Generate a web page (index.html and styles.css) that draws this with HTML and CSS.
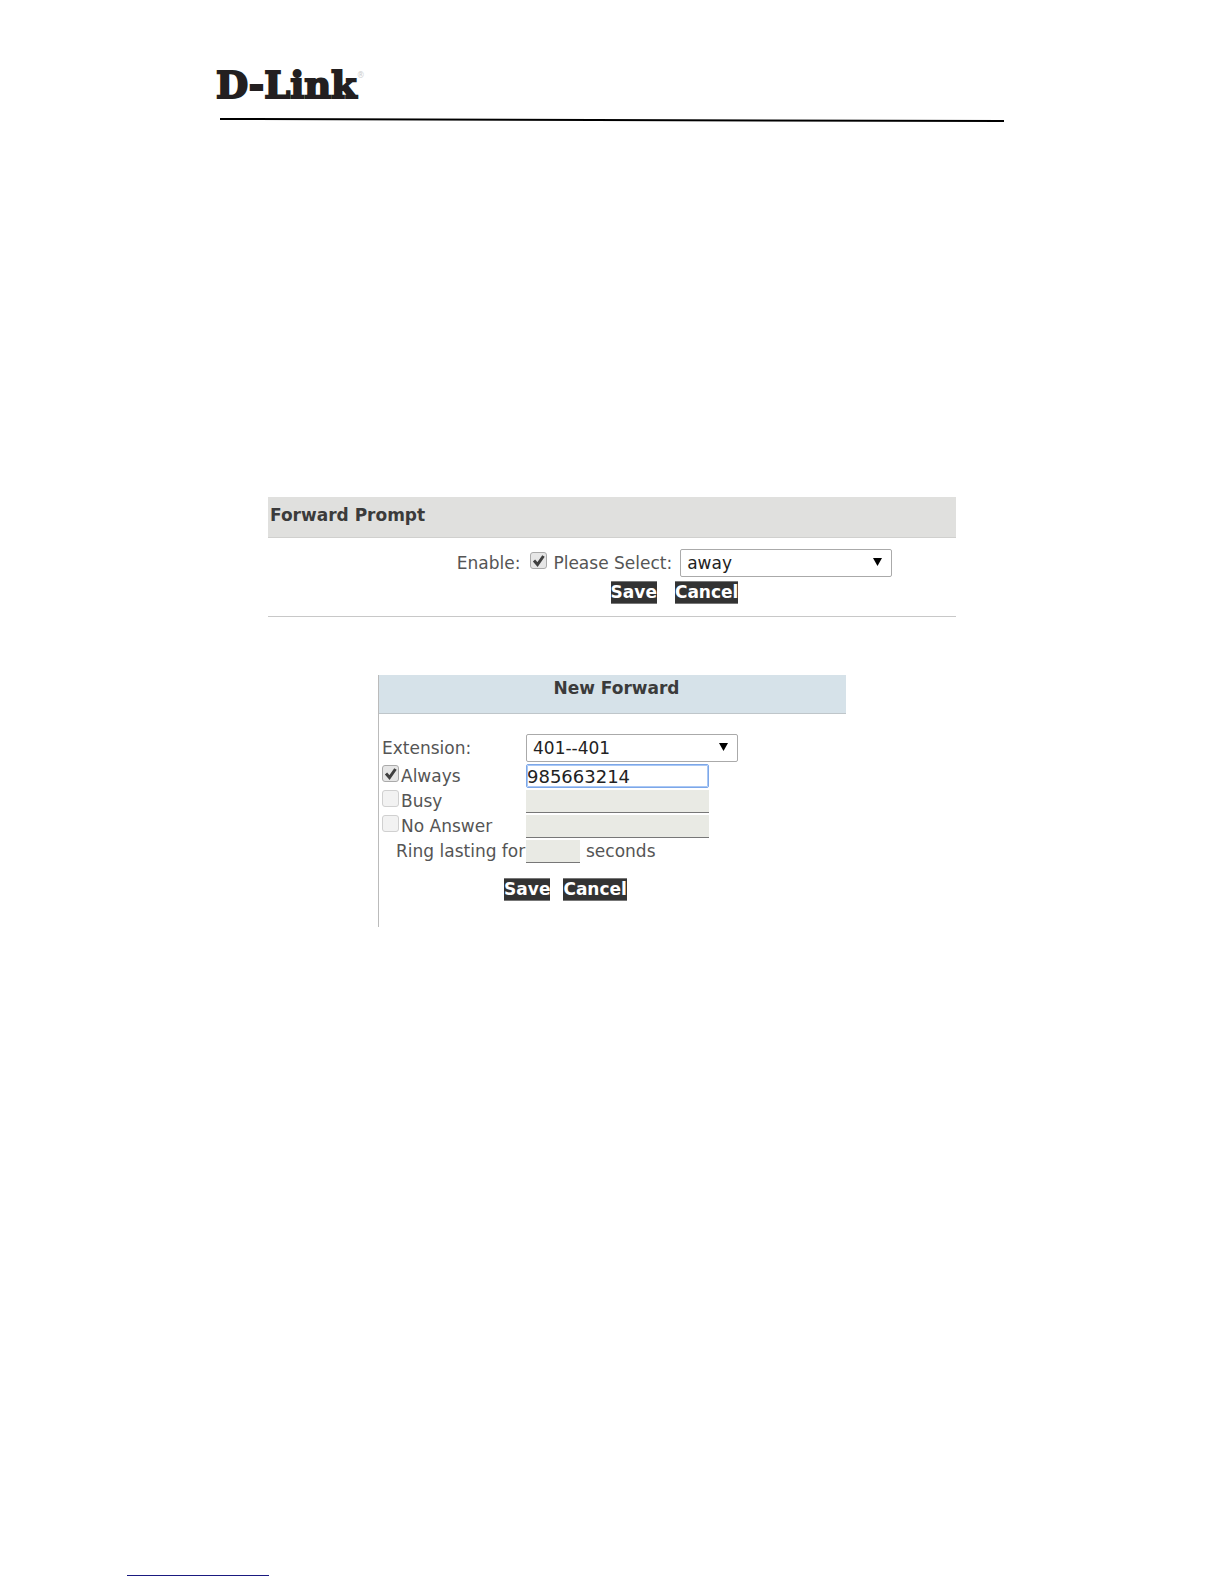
FILE: index.html
```html
<!DOCTYPE html>
<html lang="en">
<head>
    <meta charset="utf-8">
    <meta name="viewport" content="width=device-width, initial-scale=1">
    <title>D-Link</title>
    <link rel="stylesheet" href="styles.css">
</head>
<body>
<header class="page-header">
    <div class="logo">D-Link<sup class="logo-mark">®</sup></div>
    <svg class="header-rule" viewBox="0 0 784 4" preserveAspectRatio="none" aria-hidden="true">
        <path d="M0 1 L784 3" stroke="#000" stroke-width="2"/>
    </svg>
</header>

<main class="content">
    <form class="prompt-panel">
        <h2 class="prompt-title">Forward Prompt</h2>
        <div class="prompt-body">
            <div class="prompt-row">
                <label for="enable">Enable:</label>
                <input id="enable" class="checkbox prompt-checkbox" type="checkbox" checked>
                <label for="prompt">Please Select:</label>
                <select id="prompt" class="select prompt-select">
                    <option>away</option>
                </select>
            </div>
            <div class="buttons prompt-buttons">
                <button class="button" type="button">Save</button>
                <button class="button" type="button">Cancel</button>
            </div>
        </div>
    </form>

    <form class="forward-panel">
        <h2 class="forward-title">New Forward</h2>
        <div class="forward-body">
            <div class="forward-row">
                <label for="extension">Extension:</label>
                <select id="extension" class="select">
                    <option>401--401</option>
                </select>
            </div>
            <div class="forward-row">
                <div class="option">
                    <input id="always" class="checkbox" type="checkbox" checked>
                    <label for="always">Always</label>
                </div>
                <input class="text-input text-input-active" type="text" value="985663214" aria-label="Always forward to">
            </div>
            <div class="forward-row">
                <div class="option">
                    <input id="busy" class="checkbox" type="checkbox" disabled>
                    <label for="busy">Busy</label>
                </div>
                <input class="text-input" type="text" aria-label="Busy forward to" disabled>
            </div>
            <div class="forward-row">
                <div class="option">
                    <input id="no-answer" class="checkbox" type="checkbox" disabled>
                    <label for="no-answer">No Answer</label>
                </div>
                <input class="text-input" type="text" aria-label="No answer forward to" disabled>
            </div>
            <div class="forward-row">
                <label class="ring-label" for="ring">Ring lasting for</label>
                <div class="ring">
                    <input id="ring" class="text-input ring-input" type="text" disabled>
                    <span>seconds</span>
                </div>
            </div>
            <div class="buttons forward-buttons">
                <button class="button" type="button">Save</button>
                <button class="button" type="button">Cancel</button>
            </div>
        </div>
    </form>
</main>

<footer class="page-footer">
    <hr class="footer-rule">
</footer>
</body>
</html>
```

FILE: styles.css
```css
* {
    box-sizing: border-box;
}

body {
    display: flex;
    flex-direction: column;
    min-height: 100vh;
    margin: 0;
    background: #fff;
    color: #555;
    font: 17px/23px "DejaVu Sans", Verdana, sans-serif;
}

h2 {
    margin: 0;
    color: #3b3b3b;
    font-size: 17px;
    line-height: 24px;
}

/* Header */
.page-header {
    width: 100%;
    max-width: 784px;
    margin: 0 auto;
    padding-top: 65px;
}

.logo {
    margin-left: -4px;
    color: #231f20;
    font: bold 37px/40px "DejaVu Serif", serif;
    -webkit-text-stroke: 2px #231f20;
}

.logo-mark {
    color: #ccc;
    font: 8px/8px "DejaVu Sans", sans-serif;
    vertical-align: 20px;
    -webkit-text-stroke: 0;
}

.header-rule {
    display: block;
    width: 100%;
    height: 4px;
    margin-top: 13px;
}

/* Panels */
.content {
    flex: 1;
    padding-top: 375px;
}

.prompt-panel {
    max-width: 688px;
    margin: 0 auto;
    border-bottom: 1px solid #c8c8c8;
}

.prompt-title {
    height: 41px;
    padding: 6px 2px;
    border-bottom: 1px solid #d0d0ce;
    background: #e0e0de;
}

.prompt-body {
    padding: 11px 0 12px 125px;
}

.prompt-row {
    display: flex;
    align-items: center;
    justify-content: center;
}

.prompt-select {
    margin-left: 8px;
}

.forward-panel {
    max-width: 468px;
    min-height: 252px;
    margin: 58px auto 0;
    border-left: 1px solid #bbb;
}

.forward-title {
    height: 39px;
    padding: 1px 0 0 8px;
    border-bottom: 1px solid #bfc6ca;
    background: #d6e2e9;
    text-align: center;
}

.forward-body {
    max-width: 370px;
    padding: 20px 0 0 3px;
}

.forward-row {
    display: grid;
    grid-template-columns: 144px 1fr;
    align-items: center;
    justify-items: start;
    margin-bottom: 2px;
}

.option,
.ring {
    display: flex;
    align-items: center;
}

.ring {
    gap: 6px;
}

.ring-label {
    padding-left: 14px;
    white-space: nowrap;
}

/* Controls */
.select {
    width: 212px;
    height: 28px;
    padding: 0 6px;
    border: 1px solid #aaa;
    border-radius: 2px;
    background: #fff url("data:image/svg+xml,%3Csvg xmlns='http://www.w3.org/2000/svg' width='9' height='8'%3E%3Cpath d='M0 0h9L4.500 8z'/%3E%3C/svg%3E") no-repeat right 9px top 8px;
    color: #222;
    font: inherit;
    appearance: none;
}

.text-input {
    width: 183px;
    height: 23px;
    padding: 0;
    border: 0;
    border-bottom: 1px solid #777;
    background: #e9eae4;
    color: #222;
    font: 18px/20px "DejaVu Sans", Verdana, sans-serif;
}

.text-input-active {
    height: 24px;
    border: 1px solid #7da7e8;
    border-radius: 2px;
    outline: 1px solid #a9c8f5;
    outline-offset: -2px;
    background: #fff;
}

.ring-input {
    width: 54px;
}

.checkbox {
    flex: none;
    width: 17px;
    height: 17px;
    margin: 0 2px 6px 0;
    border: 1px solid #aaa;
    border-radius: 3px;
    background: #e6e6e6;
    appearance: none;
}

.checkbox:checked {
    background: #e6e6e6 url("data:image/svg+xml,%3Csvg xmlns='http://www.w3.org/2000/svg' width='15' height='15'%3E%3Cpath d='M3 7.500l3.500 4L12.500 3' fill='none' stroke='%23404040' stroke-width='3'/%3E%3C/svg%3E") center no-repeat;
}

.checkbox:disabled {
    border-color: #d0d0d0;
    background: #f2f2f2;
}

.prompt-checkbox {
    margin: 0 6px 6px 10px;
}

.buttons {
    display: flex;
    justify-content: center;
}

.prompt-buttons {
    gap: 18px;
    margin-top: 4px;
}

.forward-buttons {
    gap: 13px;
    margin-top: 15px;
}

.button {
    height: 23px;
    padding: 0;
    border: 1px solid #777;
    border-width: 1px 0;
    background: #333;
    color: #fff;
    font: bold 17px/21px "DejaVu Sans", Verdana, sans-serif;
}

/* Footer */
.page-footer {
    padding: 0 127px 8px;
}

.footer-rule {
    width: 142px;
    height: 1px;
    margin: 0;
    border: 0;
    background: #1a1a80;
}
```
